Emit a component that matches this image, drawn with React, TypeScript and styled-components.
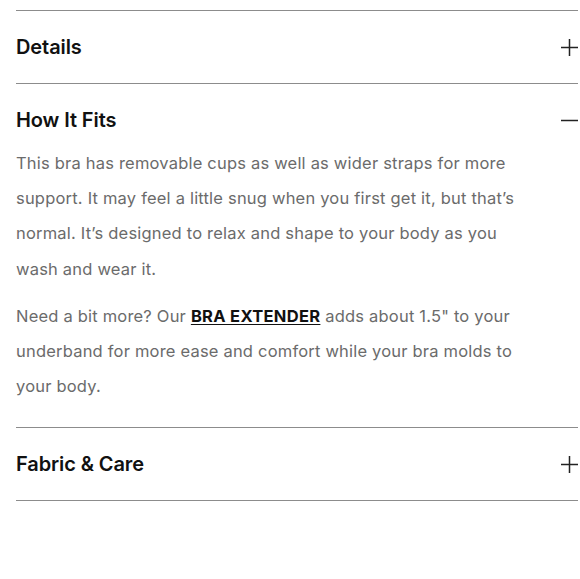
import React, { useState } from "react";
import styled, { createGlobalStyle } from "styled-components";

const Global = createGlobalStyle`
  html, body { margin: 0; padding: 0; background: #fff; }
  body { font-family: Inter, "Noto Sans", sans-serif; -webkit-font-smoothing: antialiased; }
  * { box-sizing: border-box; }
`;

const Accordion = styled.div`
  padding: 10px 2px 0 16px;
  width: 580px;
`;

const Item = styled.section<{ $last?: boolean }>`
  border-top: 1px solid #8c8c8c;
  border-bottom: ${(p) => (p.$last ? "1px solid #8c8c8c" : "none")};
  padding-bottom: 12px;
`;

const Header = styled.button<{ $open?: boolean }>`
  display: flex;
  width: 100%;
  align-items: center;
  justify-content: space-between;
  padding: 24px 0 ${(p) => (p.$open ? "14px" : "12px")};
  border: 0;
  background: none;
  cursor: pointer;
  font: inherit;
  text-align: left;
`;

const Title = styled.h3`
  margin: 0;
  font-size: 20px;
  line-height: 24px;
  font-weight: 560;
  color: #111;
  letter-spacing: -0.1px;
`;

const Icon = styled.svg`
  width: 17px;
  height: 17px;
  flex: none;
  color: #222;
`;

const Content = styled.div`
  padding: 0 48px 11px 0;
`;

const Para = styled.p`
  margin: 0 0 12px;
  font-size: 16.5px;
  line-height: 35.2px;
  letter-spacing: 0.2px;
  color: #6b6b6b;
  &:last-child { margin-bottom: 0; }
`;

const Link = styled.a`
  color: #111;
  font-weight: 650;
  letter-spacing: 0.3px;
  text-decoration: underline;
  text-underline-offset: 2px;
`;

const Plus = () => (
  <Icon viewBox="0 0 17 17" fill="none" stroke="currentColor" strokeWidth="1.5">
    <path d="M8.5 0v17M0 8.5h17" />
  </Icon>
);
const Minus = () => (
  <Icon viewBox="0 0 17 17" fill="none" stroke="currentColor" strokeWidth="1.5">
    <path d="M0 8.5h17" />
  </Icon>
);

type Sec = { title: string; body?: React.ReactNode };

const sections: Sec[] = [
  { title: "Details" },
  {
    title: "How It Fits",
    body: (
      <>
        <Para>
          This bra has removable cups as well as wider straps for more support. It may feel a
          little snug when you first get it, but that’s normal. It’s designed to relax and shape
          to your body as you wash and wear it.
        </Para>
        <Para>
          Need a bit more? Our <Link href="#">BRA EXTENDER</Link> adds about 1.5" to your
          underband for more ease and comfort while your bra molds to your body.
        </Para>
      </>
    ),
  },
  { title: "Fabric & Care" },
];

export default function App() {
  const [open, setOpen] = useState(1);
  return (
    <>
      <Global />
      <Accordion>
        {sections.map((s, i) => (
          <Item key={s.title} $last={i === sections.length - 1}>
            <Header $open={open === i} onClick={() => setOpen(open === i ? -1 : i)}>
              <Title>{s.title}</Title>
              {open === i ? <Minus /> : <Plus />}
            </Header>
            {open === i && s.body && <Content>{s.body}</Content>}
          </Item>
        ))}
      </Accordion>
    </>
  );
}
